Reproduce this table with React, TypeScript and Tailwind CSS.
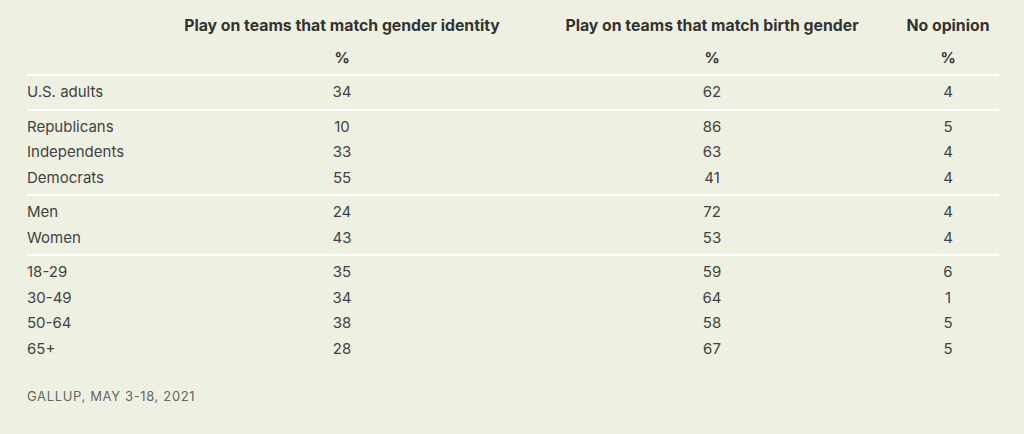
const groups: [string, number, number, number][][] = [
  [["U.S. adults", 34, 62, 4]],
  [
    ["Republicans", 10, 86, 5],
    ["Independents", 33, 63, 4],
    ["Democrats", 55, 41, 4],
  ],
  [
    ["Men", 24, 72, 4],
    ["Women", 43, 53, 4],
  ],
  [
    ["18-29", 35, 59, 6],
    ["30-49", 34, 64, 1],
    ["50-64", 38, 58, 5],
    ["65+", 28, 67, 5],
  ],
];

const cols = "grid grid-cols-[130px_370px_370px_1fr]";

export default function App() {
  return (
    <div className="w-[1024px] h-[434px] bg-[#eef1e2] pl-[27px] pr-[25px] font-['Inter',sans-serif] text-[#424242]">
      <div className="pt-[16px] pb-[6px] font-bold text-[#333]">
        <div className={`${cols} h-[20px] leading-[20px] text-[15.8px]`}>
          <div />
          <div className="text-center">Play on teams that match gender identity</div>
          <div className="text-center">Play on teams that match birth gender</div>
          <div className="text-center">No opinion</div>
        </div>
        <div className={`${cols} h-[20px] leading-[20px] mt-[12px] text-[15px]`}>
          <div />
          <div className="text-center">%</div>
          <div className="text-center">%</div>
          <div className="text-center">%</div>
        </div>
      </div>
      {groups.map((rows, i) => (
        <div key={i} className="border-t-2 border-white py-[3.5px] text-[15px]">
          {rows.map(([label, a, b, c]) => (
            <div key={label} className={`${cols} h-[25.5px] items-center`}>
              <div>{label}</div>
              <div className="text-center">{a}</div>
              <div className="text-center">{b}</div>
              <div className="text-center">{c}</div>
            </div>
          ))}
        </div>
      ))}
      <div className="mt-[22px] text-[13px] leading-[18px] tracking-[0.05em] uppercase text-[#666]">
        Gallup, May 3-18, 2021
      </div>
    </div>
  );
}
